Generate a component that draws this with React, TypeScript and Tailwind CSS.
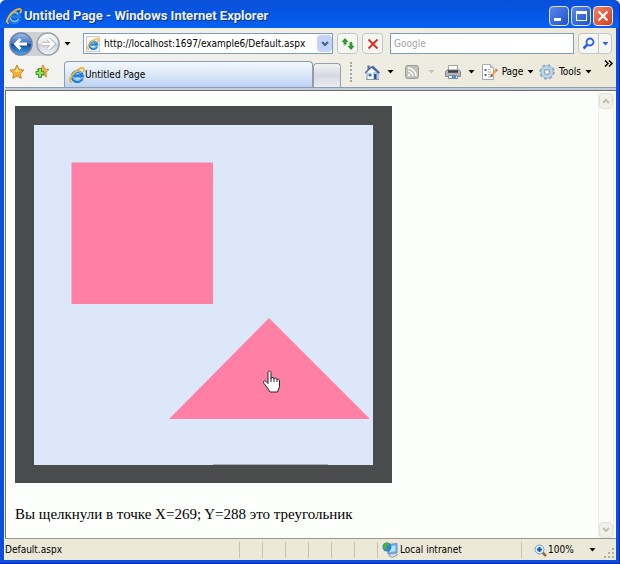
import type { ReactNode } from "react";

const CaretDown = ({ className = "text-black" }: { className?: string }) => (
  <svg width="7" height="4" viewBox="0 0 7 4" className={`shrink-0 ${className}`}>
    <path d="M.5 0h6l-3 3.500z" fill="currentColor" />
  </svg>
);

const ExplorerIcon = ({ size = 16 }: { size?: number }) => (
  <svg width={size} height={size} viewBox="0 0 16 16" className="shrink-0" fill="none">
    <path d="M13.200 11.200A5 5 0 1 1 13.400 8.800H5" stroke="#2480dc" strokeWidth="3.200" />
    <path d="M12.500 11A4.600 4.600 0 0 1 4 9.500M4.200 7.500a4.500 4.500 0 0 1 8-1.300" stroke="#86d0fa" strokeWidth="1.200" />
    <path
      d="M2.800 15C-.6 15.200 1 9.600 5.600 5.300S14.800-.3 15 2.200c.1 1-.3 2-.9 3"
      stroke="#f8b22a"
      strokeWidth="1.800"
    />
  </svg>
);

const ArrowCircle = ({ direction }: { direction: "back" | "forward" }) => {
  const back = direction === "back";
  return (
    <svg width="24" height="24" viewBox="0 0 24 24">
      <defs>
        <linearGradient id={direction} x1="0" y1="0" x2="0" y2="1">
          <stop offset="0" stopColor={back ? "#a3c0ec" : "#ffffff"} />
          <stop offset=".48" stopColor={back ? "#3c74c4" : "#e2e5e9"} />
          <stop offset=".52" stopColor={back ? "#134a9e" : "#cdd1d8"} />
          <stop offset="1" stopColor={back ? "#4aa6ee" : "#f4f6f8"} />
        </linearGradient>
      </defs>
      <circle
        cx="12"
        cy="12"
        r="11"
        fill={`url(#${direction})`}
        stroke={back ? "#7183a3" : "#9ea4ad"}
        strokeWidth="1.500"
      />
      <path
        d={back ? "M18 12H7M11.500 7L6.500 12l5 5" : "M6 12h11M12.500 7l5 5-5 5"}
        stroke={back ? "#fff" : "#a4a9b1"}
        strokeWidth={back ? "2.800" : "4"}
        fill="none"
      />
      {!back && <path d="M6 12h11M12.500 7l5 5-5 5" stroke="#fff" strokeWidth="2.500" fill="none" />}
    </svg>
  );
};

const STAR = "M8 1l2.100 4.500 4.900.6-3.600 3.400.9 4.900L8 12l-4.300 2.400.9-4.900L1 6.100l4.900-.6z";

const StarIcon = () => (
  <svg width="16" height="16" viewBox="0 0 16 16">
    <path d={STAR} fill="#fbb034" stroke="#c98a34" />
    <path d="M8 3.500L9.300 6.500l2.700.4-4 1.100-3.500-1 2.200-.5z" fill="#ffe48a" />
  </svg>
);

const AddStarIcon = () => (
  <svg width="16" height="16" viewBox="0 0 16 16">
    <path d={STAR} fill="#fbb034" stroke="#c98a34" transform="translate(2 0) scale(.87 .9)" />
    <path d="M4.500 4.500h3v3h2.500v3H7.500v3h-3v-3H2v-3h2.500z" fill="#8ee060" stroke="#2f9a2a" />
  </svg>
);

const HomeIcon = () => (
  <svg width="17" height="17" viewBox="0 0 17 17">
    <path d="M3 8v7.500h11V8L8.500 3z" fill="#fff" stroke="#8196ba" />
    <path d="M9 8h5v7H9z" fill="#b9cbea" />
    <path d="M7 3.500L9 1.500l7 7-1.500 1.500z" fill="#4669ad" />
    <path d="M1 9l6.500-6.500" fill="none" stroke="#5575b2" strokeWidth="1.500" />
    <path d="M3.500 1.500h2V4l-2 2z" fill="#4c6699" />
    <path d="M4.500 9.500h3v3h-3z" fill="#3d74c8" />
    <path d="M10 10h2.500v5H10z" fill="#2f5291" />
    <path d="M2 15.500h13" stroke="#7a9ac0" />
  </svg>
);

const FeedIcon = () => (
  <svg width="14" height="14" viewBox="0 0 14 14" fill="none">
    <rect x=".5" y=".5" width="13" height="13" rx="2" fill="#c0c0bb" stroke="#9d9d97" />
    <circle cx="4" cy="10" r="1.300" fill="#fff" />
    <path d="M3 6.200a4.800 4.800 0 0 1 4.800 4.800M3 3a8 8 0 0 1 8 8" stroke="#fff" strokeWidth="1.500" />
  </svg>
);

const PrinterIcon = () => (
  <svg width="16" height="16" viewBox="0 0 16 16">
    <path d="M3.500 1.500h9v6h-9z" fill="#fff" stroke="#a2a2a2" />
    <path d="M.5 7.500L2 6h12l1.500 1.500v5H.5z" fill="#b2b5ba" stroke="#85888e" />
    <path d="M3 7.500h10" stroke="#3c3e44" strokeWidth="2.500" />
    <path d="M3.500 11.500h9v3h-9z" fill="#e8edf4" stroke="#8a8a8a" />
    <path d="M7 12h4v2.500H7z" fill="#3f95e2" />
  </svg>
);

const PageIcon = () => (
  <svg width="17" height="16" viewBox="0 0 17 16">
    <path d="M1.500.5h8l3 3v12h-11z" fill="#fff" stroke="#a3aab5" />
    <path d="M9.500.5v3h3" fill="#dde4ee" stroke="#a3aab5" />
    <path d="M3.500 5h2v2h-2zM3.500 10h2v2h-2z" fill="#4d699c" />
    <path d="M7 5.500h3M7 8h3M7 10.500h3M7 13h2" stroke="#a9b4c8" />
    <path d="M15.500 6L10 12" stroke="#eba945" strokeWidth="2.500" />
    <path d="M10.500 10.500l-1.500 3 3-1.500z" fill="#5b4322" />
    <path d="M14.500 5l2 2" stroke="#c9735f" strokeWidth="1.500" />
  </svg>
);

const GearIcon = () => (
  <svg width="16" height="16" viewBox="0 0 16 16" fill="none">
    <circle cx="8" cy="8" r="6.500" stroke="#8faac6" strokeWidth="2.500" strokeDasharray="2.550 2.550" />
    <circle cx="8" cy="8" r="4.500" stroke="#88a4c2" strokeWidth="4" />
    <circle cx="8" cy="8" r="4.500" stroke="#bcd3e8" strokeWidth="2.800" />
    <circle cx="8" cy="8" r="2.500" fill="#f6f6f0" stroke="#7f9cbc" />
  </svg>
);

const RefreshIcon = () => (
  <svg width="14" height="14" viewBox="0 0 14 14">
    <path d="M4 1l-3.500 4h2v2.500h3V5h2z" fill="#2c9b2c" />
    <path d="M5 7.500L4 8.500H2.500z" fill="#2c9b2c" />
    <path d="M10 13l3.500-4h-2V7C11.500 5.500 11 5 9 5c-.3 1-.5 1-.5 2v2h-2z" fill="#2c9b2c" />
  </svg>
);

const NetworkIcon = () => (
  <svg width="16" height="16" viewBox="0 0 16 16">
    <path d="M6 2.500l9-1v9.500l-9 1z" fill="#63b4ee" stroke="#6c8fb8" />
    <path d="M8 4l5.500-.6v5.800L8 10z" fill="#b5e4ff" />
    <circle cx="5" cy="5" r="4.500" fill="#2f7ed8" />
    <path d="M2 2C4 0 6 1 7 2S5 4 5 5.500 3 9 1 6.500z" fill="#49b13c" />
    <path d="M8 12l6-.8 1.500 1.800-5 2.500L7 14z" fill="#d3dae6" stroke="#93a2ba" />
  </svg>
);

const ZoomIcon = () => (
  <svg width="13" height="13" viewBox="0 0 13 13">
    <path d="M8.500 8.500L12 12" stroke="#a06a2e" strokeWidth="2.500" />
    <circle cx="5.500" cy="5.500" r="4.500" fill="#dcefff" stroke="#7d9dc6" />
    <path d="M5.500 3v5M3 5.500h5" stroke="#1257c8" strokeWidth="2" />
  </svg>
);

const Chevron = ({ up = false, color }: { up?: boolean; color: string }) => (
  <svg width="8" height="6" viewBox="0 0 8 6">
    <path d={up ? "M1 5l3-3 3 3" : "M1 1l3 3 3-3"} fill="none" stroke={color} strokeWidth="2" />
  </svg>
);

const ToolButton = ({
  name,
  label,
  muted,
  className = "",
  children,
}: {
  name: string;
  label?: string;
  muted?: boolean;
  className?: string;
  children: ReactNode;
}) => (
  <button
    type="button"
    aria-label={name}
    className={`flex h-6 shrink-0 items-center justify-between ${className}`}
  >
    {children}
    {label && <span>{label}</span>}
    <CaretDown className={muted ? "text-[#c4c1b3]" : "text-black"} />
  </button>
);

const TitleBar = () => (
  <header
    className="flex h-7 shrink-0 items-center rounded-t-md bg-linear-to-b from-[#0a50d8] via-[#0456e4] to-[#0861f4]
    pt-1 pr-[6px] pl-[6px]"
  >
    <ExplorerIcon />
    <h1 className="ml-[2px] flex-1 font-[Roboto,sans-serif] text-[13px] leading-4 font-bold text-[#eaf2ff] [text-shadow:1px_1px_0_#0a2f86]">
      Untitled Page - Windows Internet Explorer
    </h1>
    <div className="flex gap-[2px]">
      <button
        type="button"
        aria-label="Minimize"
        className="flex size-5 items-end rounded-sm border border-[#dfe8fb] bg-linear-to-br from-[#5c88ea] to-[#1c4fd0] p-1"
      >
        <span className="h-[3px] w-[7px] bg-white"></span>
      </button>
      <button
        type="button"
        aria-label="Maximize"
        className="flex size-5 items-center justify-center rounded-sm border border-[#dfe8fb] bg-linear-to-br from-[#5c88ea] to-[#1c4fd0]"
      >
        <span className="h-[10px] w-[11px] border border-t-3 border-white"></span>
      </button>
      <button
        type="button"
        aria-label="Close"
        className="flex size-5 items-center justify-center rounded-sm border border-[#f4e2dc] bg-linear-to-br from-[#ec8468] to-[#d33a14]"
      >
        <svg width="12" height="12" viewBox="0 0 12 12">
          <path d="M1.500 1.500l9 9M10.500 1.500l-9 9" stroke="#fff" strokeWidth="2" />
        </svg>
      </button>
    </div>
  </header>
);

const AddressBar = () => (
  <div className="flex h-[31px] items-center pr-1 pl-1">
    <div className="flex gap-[3px] rounded-full bg-[#cfd2d4]">
      <button type="button" aria-label="Back">
        <ArrowCircle direction="back" />
      </button>
      <button type="button" aria-label="Forward">
        <ArrowCircle direction="forward" />
      </button>
    </div>
    <button type="button" aria-label="Recent pages" className="ml-[2px] flex h-5 w-[10px] items-center justify-center">
      <CaretDown />
    </button>
    <div className="ml-[11px] flex h-[21px] min-w-0 flex-1 items-center border border-[#7f9db9] bg-white pl-[2px]">
      <span className="mr-1 flex h-4 w-[14px] items-center justify-center border border-[#c6cad0] bg-[#f8f8f4]">
        <ExplorerIcon size={12} />
      </span>
      <input
        type="text"
        aria-label="Address"
        defaultValue="http://localhost:1697/example6/Default.aspx"
        className="min-w-0 flex-1 outline-none"
      />
      <button
        type="button"
        aria-label="Show address history"
        className="flex h-[17px] w-[15px] shrink-0 items-center justify-center rounded-sm bg-[#c3d3fb]"
      >
        <Chevron color="#4d6185" />
      </button>
    </div>
    <button
      type="button"
      aria-label="Refresh"
      className="ml-1 flex size-[21px] items-center justify-center rounded-sm border border-[#c0c6cc] bg-[#f6f6f2]"
    >
      <RefreshIcon />
    </button>
    <button
      type="button"
      aria-label="Stop"
      className="ml-1 flex size-[21px] items-center justify-center rounded-sm border border-[#c0c6cc] bg-[#f6f6f2]"
    >
      <svg width="12" height="12" viewBox="0 0 12 12">
        <path d="M1.500 1.500l9 9M10.500 1.500l-9 9" stroke="#dc2c20" strokeWidth="1.800" />
      </svg>
    </button>
    <input
      type="search"
      aria-label="Search"
      placeholder="Google"
      className="ml-[7px] h-[21px] w-[184px] border border-[#7f9db9] bg-white px-[3px] outline-none placeholder:text-[#a5a59f]"
    />
    <div className="ml-1 flex h-[21px] rounded-sm border border-[#c0c6cc] bg-[#f6f6f2]">
      <button type="button" aria-label="Run search" className="flex w-[19px] items-center justify-center">
        <svg width="13" height="13" viewBox="0 0 13 13" fill="none">
          <circle cx="8" cy="5" r="3.500" stroke="#2a62dc" strokeWidth="1.800" />
          <path d="M5.500 7.500L1.500 11.500" stroke="#2a62dc" strokeWidth="2.500" />
        </svg>
      </button>
      <button
        type="button"
        aria-label="Search options"
        className="flex w-[13px] items-center justify-center border-l border-[#c0c6cc]"
      >
        <CaretDown className="text-[#2a62dc]" />
      </button>
    </div>
  </div>
);

const TabRow = () => (
  <div className="flex h-7 items-end pl-1">
    <div className="flex items-center gap-[9px] self-start pt-[5px]">
      <button type="button" aria-label="Favorites">
        <StarIcon />
      </button>
      <button type="button" aria-label="Add to favorites">
        <AddStarIcon />
      </button>
    </div>
    <div className="ml-[14px] flex items-end" role="tablist">
      <button
        type="button"
        role="tab"
        aria-selected="true"
        className="flex h-[26px] w-[249px] items-center rounded-t-sm border border-b-0 border-[#8f9cae]
        bg-linear-to-b from-[#f3f8fd] via-[#dbe8f8] to-[#bcd3f7] pl-1"
      >
        <ExplorerIcon />
        <span>Untitled Page</span>
      </button>
      <button
        type="button"
        aria-label="New tab"
        className="h-6 w-7 rounded-t-sm border border-b-0 border-[#9b9fa8] bg-linear-to-b from-[#f1f2f2] via-[#d5d9e2] to-[#ecedf0]"
      ></button>
    </div>
    <div className="flex min-w-0 flex-1 items-center self-start pt-px pl-[9px]">
      <span className="mr-3 h-5 border-l-2 border-dotted border-[#aaa799]"></span>
      <ToolButton name="Home" className="mr-[11px] w-[30px]">
        <HomeIcon />
      </ToolButton>
      <ToolButton name="Feeds" muted className="mr-[10px] w-[30px]">
        <FeedIcon />
      </ToolButton>
      <ToolButton name="Print" className="mr-[6px] w-[30px]">
        <PrinterIcon />
      </ToolButton>
      <ToolButton name="Page" label="Page" className="mr-[5px] w-[53px]">
        <PageIcon />
      </ToolButton>
      <ToolButton name="Tools" label="Tools" className="w-[53px]">
        <GearIcon />
      </ToolButton>
      <button type="button" aria-label="More tools" className="mr-[3px] ml-auto self-start">
        <svg width="9" height="7" viewBox="0 0 9 7">
          <path d="M1 .5l3 3-3 3M5 .5l3 3-3 3" fill="none" stroke="#000" strokeWidth="1.500" />
        </svg>
      </button>
    </div>
  </div>
);

const ShapesImage = () => (
  <svg width="377" height="377" viewBox="0 0 377 377" role="img" aria-label="Shapes">
    <rect width="377" height="377" fill="#4a4b4d" />
    <rect x="19" y="19" width="339" height="340" fill="#dce8fa" />
    <path d="M198 358.500h115" stroke="#a9adb5" />
    <rect x="56.500" y="56.500" width="141.500" height="141.500" fill="#ff80a4" />
    <path d="M254 212L354 312v1H154z" fill="#ff80a4" />
    {/* hand pointer */}
    <path
      d="M253 266.500c0-2 3-2 3 0v6c0-1.500 3-1.500 3 .5 0-1.500 3-1.200 3 .8 0-1.300 2.500-1 2.500 1v5.700l-2 5.500h-7.500l-2.500-4-3.500-4.500c-1.500-2.500.5-3.500 2-2l2 2z"
      fill="#fff"
      stroke="#222"
    />
    <path d="M256 272v4M259 273v3M262 274v2" stroke="#222" />
  </svg>
);

const ScrollBar = () => (
  <div className="mr-[2px] flex w-4 shrink-0 flex-col justify-between border-x border-[#eeede5] bg-[#fbfbf8] pt-px">
    <button type="button" aria-label="Scroll up" className="flex h-4 items-center justify-center rounded-sm border border-[#e3e2d8] bg-[#f1f0ea]">
      <Chevron up color="#c0beb2" />
    </button>
    <button type="button" aria-label="Scroll down" className="flex h-4 items-center justify-center rounded-sm border border-[#e3e2d8] bg-[#f1f0ea]">
      <Chevron color="#c0beb2" />
    </button>
  </div>
);

const StatusBar = () => (
  <footer className="flex h-[22px] shrink-0 items-center border-t border-[#9b998d] bg-[#ece9d8] pt-px">
    <span className="flex-1">Default.aspx</span>
    {["popup", "phishing", "privacy", "security", "addons", "certificate"].map((pane) => (
      <span key={pane} className="h-4 w-[23px] border-l border-[#c5c2b2]"></span>
    ))}
    <div className="flex h-4 w-[144px] items-center gap-[2px] border-l border-[#c5c2b2] pl-1">
      <NetworkIcon />
      <span>Local intranet</span>
    </div>
    <button
      type="button"
      aria-label="Change zoom level"
      className="flex h-4 w-[75px] items-center border-l border-[#c5c2b2] pl-3"
    >
      <ZoomIcon />
      <span className="mr-auto ml-[1px]">100%</span>
      <CaretDown />
    </button>
    <svg width="12" height="12" viewBox="0 0 12 12" className="ml-2 self-end">
      <path
        d="M8 0h2v2H8zM4 4h2v2H4zM8 4h2v2H8zM0 8h2v2H0zM4 8h2v2H4zM8 8h2v2H8z"
        fill="#b3b09f"
      />
    </svg>
  </footer>
);

const App = () => {
  return (
    <div className="bg-white">
      <div
        className="flex min-h-screen flex-col rounded-t-md border-r border-b border-[#0726a8] bg-[#0a4fe0]
        font-['DejaVu_Sans_Condensed',sans-serif] text-[10px] leading-4 text-black"
      >
        <TitleBar />
        <div className="mr-[3px] mb-[3px] ml-1 flex flex-1 flex-col bg-linear-to-r from-[#f3f4f3] to-[#ece9d8] pl-px">
          <nav>
            <AddressBar />
            <TabRow />
            <div className="h-[3px] border-t border-[#8f9cae] bg-[#c3cddd]"></div>
          </nav>
          <div className="flex flex-1 border-t border-l border-[#716f64] bg-[#fdfffc] pt-px">
            <main className="flex-1 pt-[14px] pl-[9px]">
              <ShapesImage />
              <p className="mt-[21px] font-['Liberation_Serif',serif] text-[15px] leading-5">
                Вы щелкнули в точке X=269; Y=288 это треугольник
              </p>
            </main>
            <ScrollBar />
          </div>
          <StatusBar />
        </div>
      </div>
    </div>
  );
};

export default App;
